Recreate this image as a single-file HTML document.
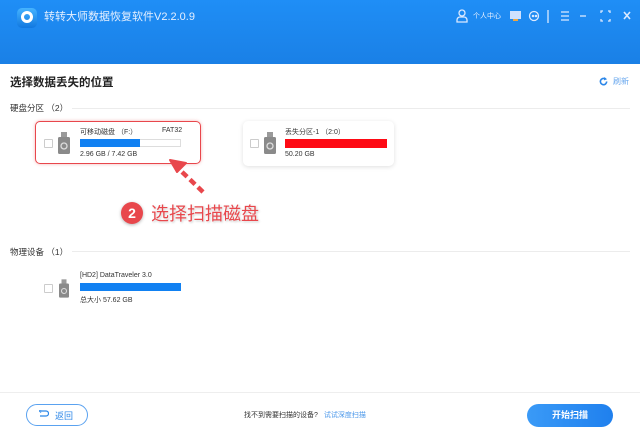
<!DOCTYPE html>
<html><head><meta charset="utf-8"><style>
*{margin:0;padding:0;box-sizing:border-box}
body{width:640px;height:438px;overflow:hidden;background:#fff;font-family:"Liberation Sans","Noto Sans CJK SC",sans-serif;position:relative;color:#333}
.a{position:absolute;white-space:nowrap}
.hdr{position:absolute;left:0;top:0;width:640px;height:64px;background:linear-gradient(#1f8ef6,#1a80e6)}
.chk{position:absolute;width:9px;height:9px;border:1px solid #ccc;background:#fff;border-radius:1px}
.line{position:absolute;height:1px;background:#ececec}
.usb{position:absolute}
</style></head><body>
<div class="hdr"></div>
<div class="a" style="left:17px;top:8px;width:20px;height:20px;border-radius:5px;background:linear-gradient(#45b3ff,#1077e0)"></div>
<div class="a" style="left:21px;top:11px;width:12px;height:12px;border-radius:50%;border:3px solid #fff"></div>
<div class="a" style="left:44px;top:10px;font-size:11px;color:#e6f0ff;line-height:14px">转转大师数据恢复软件V2.2.0.9</div>
<svg class="a" style="left:456px;top:8px" width="180" height="18" viewBox="456 8 180 18" fill="none" stroke="#dbe9ff" stroke-width="1.3">
<circle cx="462" cy="13" r="3"/><path d="M457 22h10v-2a3 3 0 0 0-3-3h-4a3 3 0 0 0-3 3z"/>
<rect x="510" y="11" width="11" height="8" fill="#cfe1ff" stroke="none"/><rect x="513" y="19" width="5" height="2" fill="#f0a640" stroke="none"/>
<circle cx="534" cy="16" r="4.5"/><circle cx="533" cy="16" r=".6" fill="#dbe9ff"/><circle cx="536" cy="16" r=".6" fill="#dbe9ff"/>
<path d="M548 10v13"/><path d="M561 12h8M561 16h8M561 20h8"/><path d="M580 16h6"/>
<path d="M601 13v-2h2M608 11h2v2M610 19v2h-2M603 21h-2v-2"/><path d="M624 12l6 7M630 12l-6 7" stroke-width="1.6"/>
</svg>
<div class="a" style="left:473px;top:11px;font-size:7px;color:#e6f0ff">个人中心</div>
<div class="a" style="left:10px;top:74px;font-size:11.5px;font-weight:bold;color:#222">选择数据丢失的位置</div>
<svg class="a" style="left:599px;top:77px" width="9" height="9" viewBox="0 0 10 10"><path d="M8.5 5A3.5 3.5 0 1 1 7 2.2" fill="none" stroke="#2b86e8" stroke-width="1.8"/><path d="M6 0l3 2.5-3.5 1.2z" fill="#2b86e8"/></svg>
<div class="a" style="left:613px;top:76px;font-size:8px;color:#6aa8ee">刷新</div>
<div class="a" style="left:10px;top:102px;font-size:8.5px;color:#333">硬盘分区 （2）</div>
<div class="line" style="left:72px;top:108px;width:558px"></div>
<div class="a" style="left:35px;top:121px;width:166px;height:43px;border:1.5px solid #e8474c;border-radius:5px;box-shadow:0 0 3px rgba(230,70,70,.4)"></div>
<div class="chk" style="left:44px;top:139px"></div>
<svg class="usb" style="left:58px;top:132px" width="12" height="22" viewBox="0 0 12 22"><rect x="3" y="0" width="6" height="5" fill="#9a9a9a"/><rect x="0" y="5" width="12" height="17" rx="1.5" fill="#8a8a8a"/><circle cx="6" cy="14" r="3" fill="none" stroke="#ddd" stroke-width="1.3"/></svg>
<div class="a" style="left:80px;top:127px;font-size:7px;color:#333">可移动磁盘 （F:）</div>
<div class="a" style="left:162px;top:127px;font-size:7px;color:#333">FAT32</div>
<div class="a" style="left:80px;top:139px;width:101px;height:8px;border:1px solid #ddd"></div>
<div class="a" style="left:80px;top:139px;width:60px;height:8px;background:#1181f2"></div>
<div class="a" style="left:80px;top:151px;font-size:7px;color:#333">2.96 GB / 7.42 GB</div>
<div class="a" style="left:243px;top:121px;width:151px;height:45px;border-radius:5px;box-shadow:0 1px 5px rgba(0,0,0,.13);background:#fff"></div>
<div class="chk" style="left:250px;top:139px"></div>
<svg class="usb" style="left:264px;top:132px" width="12" height="22" viewBox="0 0 12 22"><rect x="3" y="0" width="6" height="5" fill="#9a9a9a"/><rect x="0" y="5" width="12" height="17" rx="1.5" fill="#8a8a8a"/><circle cx="6" cy="14" r="3" fill="none" stroke="#ddd" stroke-width="1.3"/></svg>
<div class="a" style="left:285px;top:127px;font-size:7px;color:#333">丢失分区-1 （2:0）</div>
<div class="a" style="left:285px;top:139px;width:102px;height:9px;background:#fe0a14"></div>
<div class="a" style="left:285px;top:151px;font-size:7px;color:#333">50.20 GB</div>
<svg class="a" style="left:160px;top:155px" width="60" height="45" viewBox="160 155 60 45"><path d="M203 192L180 170" stroke="#e8474c" stroke-width="4.5" stroke-dasharray="7 4" fill="none"/><path d="M170 160l16 3-9 9z" fill="#e8474c" stroke="#e8474c" stroke-width="2" stroke-linejoin="round"/></svg>
<div class="a" style="left:121px;top:202px;width:22px;height:22px;border-radius:50%;background:#e8474c;color:#fff;font-size:14px;font-weight:bold;text-align:center;line-height:22px;box-shadow:0 1px 3px rgba(0,0,0,.3)">2</div>
<div class="a" style="left:151px;top:200px;font-size:18px;color:#e8474c;text-shadow:0 0 2px #fff,1px 1px 2px rgba(0,0,0,.25)">选择扫描磁盘</div>
<div class="a" style="left:10px;top:246px;font-size:8.5px;color:#333">物理设备 （1）</div>
<div class="line" style="left:72px;top:251px;width:558px"></div>
<div class="chk" style="left:44px;top:284px"></div>
<svg class="usb" style="left:59px;top:279px" width="10" height="19" viewBox="0 0 12 22"><rect x="3" y="0" width="6" height="5" fill="#9a9a9a"/><rect x="0" y="5" width="12" height="17" rx="1.5" fill="#8a8a8a"/><circle cx="6" cy="14" r="3" fill="none" stroke="#ddd" stroke-width="1.3"/></svg>
<div class="a" style="left:80px;top:272px;font-size:7px;color:#333">[HD2] DataTraveler 3.0</div>
<div class="a" style="left:80px;top:283px;width:101px;height:8px;background:#1181f2"></div>
<div class="a" style="left:80px;top:295px;font-size:7px;color:#333">总大小 57.62 GB</div>
<div class="line" style="left:0;top:392px;width:640px;background:#eee"></div>
<div class="a" style="left:26px;top:404px;width:62px;height:22px;border:1px solid #5aa2f0;border-radius:11px"></div>
<svg class="a" style="left:39px;top:410px" width="10" height="9" viewBox="0 0 10 9"><path d="M2 1h5a2.5 2.5 0 0 1 0 5H1" fill="none" stroke="#2b86e8" stroke-width="1.2"/><path d="M2 -0.5L0.5 1 2 2.5" fill="none" stroke="#2b86e8" stroke-width="1.2"/></svg>
<div class="a" style="left:55px;top:409px;font-size:9px;color:#2b86e8">返回</div>
<div class="a" style="left:244px;top:410px;font-size:7px;color:#333">找不到需要扫描的设备? <span style="color:#4a97ea;margin-left:4px">试试深度扫描</span></div>
<div class="a" style="left:527px;top:404px;width:86px;height:23px;border-radius:12px;background:linear-gradient(90deg,#3a9af7,#1f80ee);color:#fff;font-size:9px;font-weight:bold;text-align:center;line-height:23px">开始扫描</div>
</body></html>
